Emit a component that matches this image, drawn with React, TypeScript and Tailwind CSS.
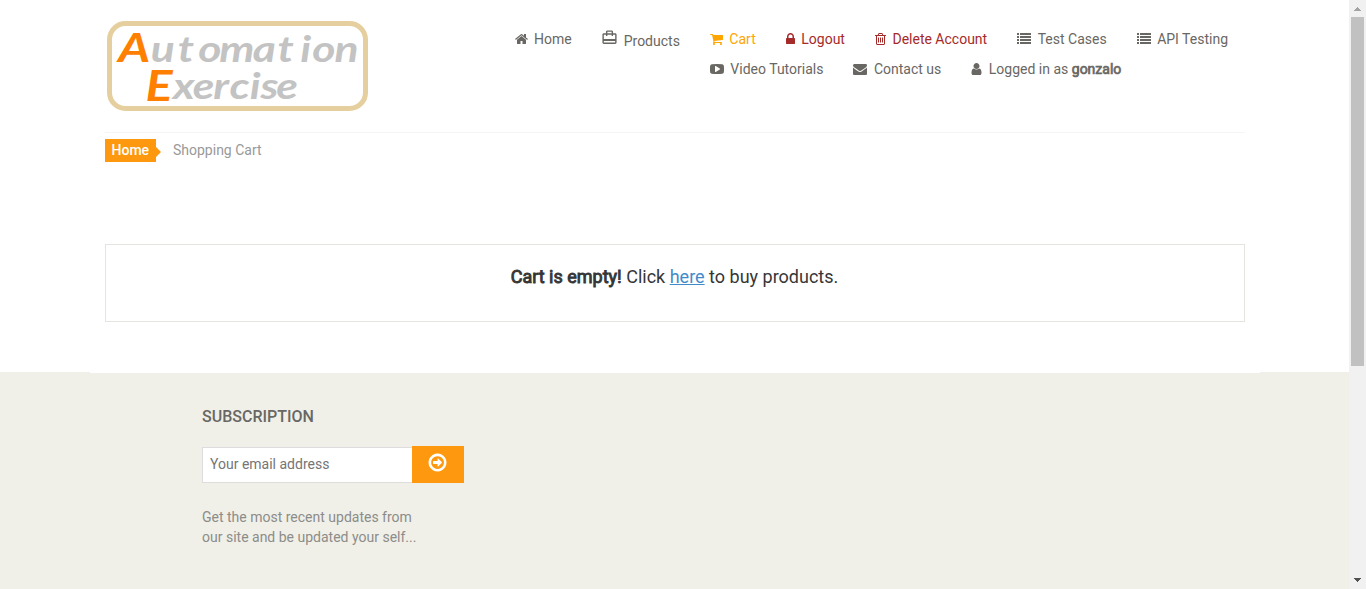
import React from "react";

type Glyph = { adv: number; d: string };

const home: Glyph = { adv: 1664, d: "M1472 992v480q0 26-19 45t-45 19h-384v-384h-256v384h-384q-26 0-45-19t-19-45v-480q0-1 .5-3t.5-3l575-474 575 474q1 2 1 6zm223-69l-62 74q-8 9-21 11h-3q-13 0-21-7l-692-577-692 577q-12 8-24 7-13-2-21-11l-62-74q-8-10-7-23.5t11-21.5l719-599q32-26 76-26t76 26l244 204v-195q0-14 9-23t23-9h192q14 0 23 9t9 23v408l219 182q10 8 11 21.5t-7 23.5z" };
const cart: Glyph = { adv: 1664, d: "M704 1536q0 52-38 90t-90 38-90-38-38-90 38-90 90-38 90 38 38 90zm896 0q0 52-38 90t-90 38-90-38-38-90 38-90 90-38 90 38 38 90zm128-1088v512q0 24-16.5 42.5t-40.5 21.5l-1044 122q13 60 13 70 0 16-24 64h920q26 0 45 19t19 45-19 45-45 19h-1024q-26 0-45-19t-19-45q0-11 8-31.5t16-36 21.5-40 15.5-29.5l-177-823h-204q-26 0-45-19t-19-45 19-45 45-19h256q16 0 28.5 6.5t19.5 15.5 13 24.5 8 26 5.5 29.5 4.5 26h1201q26 0 45 19t19 45z" };
const lock: Glyph = { adv: 1152, d: "M640 768h512v-192q0-106-75-181t-181-75-181 75-75 181v192zm832 96v576q0 40-28 68t-68 28h-960q-40 0-68-28t-28-68v-576q0-40 28-68t68-28h32v-192q0-184 132-316t316-132 316 132 132 316v192h32q40 0 68 28t28 68z" };
const trash: Glyph = { adv: 1408, d: "M704 736v576q0 14-9 23t-23 9h-64q-14 0-23-9t-9-23v-576q0-14 9-23t23-9h64q14 0 23 9t9 23zm256 0v576q0 14-9 23t-23 9h-64q-14 0-23-9t-9-23v-576q0-14 9-23t23-9h64q14 0 23 9t9 23zm256 0v576q0 14-9 23t-23 9h-64q-14 0-23-9t-9-23v-576q0-14 9-23t23-9h64q14 0 23 9t9 23zm128 724v-948h-896v948q0 22 7 40.5t14.5 27 10.5 8.5h832q3 0 10.5-8.5t14.5-27 7-40.5zm-672-1076h448l-48-117q-7-9-17-11h-317q-10 2-17 11zm928 32v64q0 14-9 23t-23 9h-96v948q0 83-47 143.5t-113 60.5h-832q-66 0-113-58.5t-47-141.5v-952h-96q-14 0-23-9t-9-23v-64q0-14 9-23t23-9h309l70-167q15-37 54-63t79-26h320q40 0 79 26t54 63l70 167h309q14 0 23 9t9 23z" };
const list: Glyph = { adv: 1792, d: "M0 1280h256v256H0zM0 896h256v256H0zM0 512h256v256H0zM384 1280h1408v256H384zM0 128h256v256H0zM384 896h1408v256H384zM384 512h1408v256H384zM384 128h1408v256H384z" };
const play: Glyph = { adv: 1792, d: "M1280 896q0-37-30-54l-512-320q-31-20-65-2-33 18-33 56v640q0 38 33 56 16 8 31 8 20 0 34-10l512-320q30-17 30-54zm512 0q0 96-1 150t-8.500 136.500-22.500 147.500q-16 73-69 123t-124 58q-222 25-671 25t-671-25q-71-8-124.500-58t-69.500-123q-14-65-21.500-147.500t-8.500-136.500-1-150 1-150 8.500-136.500 22.500-147.500q16-73 69-123t124-58q222-25 671-25t671 25q71 8 124.500 58t69.500 123q14 65 21.500 147.500t8.500 136.500 1 150z" };
const envelope: Glyph = { adv: 1792, d: "M1792 710v794q0 66-47 113t-113 47h-1472q-66 0-113-47t-47-113v-794q44 49 101 87 362 246 497 345 57 42 92.5 65.5t94.5 48 110 24.5h2q51 0 110-24.5t94.5-48 92.5-65.5q170-123 498-345 57-39 100-87zm0-294q0 79-49 151t-122 123q-376 261-468 325-10 7-42.5 31t-54 38.500-52 32.500-57.500 27-50 9h-2q-23 0-50-9t-57.500-27-52-32.500-54-38.500-42.500-31q-91-64-262-182.500t-205-142.500q-62-42-117-115.500t-55-136.500q0-78 41.500-130t118.500-52h1472q65 0 112.500 47t47.500 113z" };
const user: Glyph = { adv: 1408, d: "M1536 1399q0 109-62.5 187t-150.5 78h-854q-88 0-150.5-78t-62.5-187q0-85 8.5-160.5t31.5-152 58.5-131 94-89 134.5-34.5q131 128 313 128t313-128q76 0 134.5 34.5t94 89 58.5 131 31.5 152 8.5 160.5zm-256-887q0 159-112.5 271.5t-271.5 112.5-271.5-112.5-112.5-271.5 112.5-271.5 271.5-112.5 271.5 112.5 112.5 271.5z" };

function Icon({ g }: { g: Glyph }) {
  return (
    <svg
      className="shrink-0 overflow-visible"
      width={(g.adv / 1792) * 14}
      height={14}
      viewBox={`${(1792 - g.adv) / 2} 0 ${g.adv} 1792`}
      fill="currentColor"
    >
      <path d={g.d} fillRule="nonzero" />
    </svg>
  );
}

function NavItem({ g, color = "text-[#696763]", children }: { g: Glyph; color?: string; children: React.ReactNode }) {
  return (
    <a href="#" className={`flex h-5 items-center gap-[6.5px] whitespace-nowrap ${color}`}>
      <Icon g={g} />
      <span>{children}</span>
    </a>
  );
}

function Logo() {
  return (
    <svg width="261" height="90" viewBox="0 0 261 90" className="mt-[21px] ml-0.5 shrink-0">
      <rect x="2.5" y="2.5" width="256" height="85" rx="16" fill="none" stroke="#e6cf9f" strokeWidth="5" />
      <g transform="scale(1.2 1)" fontFamily="Lato, sans-serif" fontStyle="italic" fontWeight="700" fontSize="37">
        <text y="41" fill="#c3c3c3" x="9.3 36.5 59 76 93.5 121.5 142 161 171 189.500">
          <tspan fontSize="41" fill="#ff8000">A</tspan>utomation
        </text>
        <text y="78" fill="#c3c3c3" x="32 55 71.500 88.500 102 119 128 141">
          <tspan fontSize="42" fill="#ff8000" dy="2">E</tspan><tspan dy="-2">x</tspan>ercise
        </text>
      </g>
    </svg>
  );
}

function Scrollbar() {
  return (
    <div className="flex w-[17px] shrink-0 flex-col items-center bg-[#f1f1f1]">
      <svg width="17" height="17" viewBox="0 0 17 17" shapeRendering="crispEdges" fill="#a3a3a3">
        <path d="M8 7h1v1H8zM7 8h3v1H7zM6 9h5v1H6zM5 10h7v1H5z" />
      </svg>
      <div className="h-[349px] w-[13px] bg-[#c1c1c1]" />
      <svg className="mt-auto" width="17" height="17" viewBox="0 0 17 17" shapeRendering="crispEdges" fill="#505050">
        <path d="M5 6h7v1H5zM6 7h5v1H6zM7 8h3v1H7zM8 9h1v1H8z" />
      </svg>
    </div>
  );
}

export default function App() {
  return (
    <div className="flex h-[589px] w-[1366px] overflow-hidden bg-white font-['Roboto',sans-serif] text-sm leading-5">
      <div className="flex w-[1349px] flex-col">
        <header className="ml-[105px] flex h-[133px] w-[1140px] border-b border-[#f5f5f5]">
          <Logo />
          <nav className="ml-[146.5px] flex gap-[30px] pt-[29px]">
            <NavItem g={home}>Home</NavItem>
            <a href="#" className="flex h-5 gap-1.5 text-[#696763]">
              <svg className="-ml-px" width="17" height="17" viewBox="0 0 24 24" fill="currentColor">
                <path d="M20 6h-3V4c0-1.11-.89-2-2-2H9c-1.11 0-2 .89-2 2v2H4c-1.11 0-2 .89-2 2v11c0 1.11.89 2 2 2h16c1.11 0 2-.89 2-2V8c0-1.11-.89-2-2-2zM9 4h6v2H9V4zm11 15H4v-2h16v2zm0-5H4V8h3v2h2V8h6v2h2V8h3v6z" />
              </svg>
              <span className="pt-0.5">Products</span>
            </a>
            <div className="flex flex-col gap-2.5">
              <div className="flex gap-[30px]">
                <NavItem g={cart} color="text-[orange]">Cart</NavItem>
                <NavItem g={lock} color="text-[brown]">Logout</NavItem>
                <NavItem g={trash} color="text-[brown]">Delete Account</NavItem>
                <NavItem g={list}>Test Cases</NavItem>
                <NavItem g={list}>API Testing</NavItem>
              </div>
              <div className="flex gap-[30px]">
                <NavItem g={play}>Video Tutorials</NavItem>
                <NavItem g={envelope}>Contact us</NavItem>
                <NavItem g={user}>Logged in as <b className="font-normal [-webkit-text-stroke:0.7px]">gonzalo</b></NavItem>
              </div>
            </div>
          </nav>
        </header>

        <main className="ml-[105px] h-[239px] w-[1140px]">
          <div className="flex items-start pt-1.5">
            <span className="h-[23px] w-[51px] bg-[#fe980f] pl-[6.5px] leading-[23px] font-medium text-white">Home</span>
            <svg className="mt-2" width="5" height="10" viewBox="0 0 5 10" fill="#fe980f"><path d="M0 0l5 5-5 5z" /></svg>
            <span className="mt-px ml-3 text-[#999]">Shopping Cart</span>
          </div>
          <div className="mt-[82px] h-[78px] border border-[#e6e4df] pt-[19px] pr-px text-center text-lg leading-[26px] text-[#363636]">
            <b className="font-normal [-webkit-text-stroke:0.9px]">Cart is empty!</b> Click <a href="#" className="text-[#428bca] underline">here</a> to buy products.
          </div>
        </main>

        <footer className="flex-1 bg-[#f0f0e9]">
          <div className="mx-auto h-px w-[1170px] bg-white" />
          <div className="ml-[202px] pt-[34px]">
            <h2 className="text-base leading-5 font-medium text-[#696763]">SUBSCRIPTION</h2>
            <div className="mt-[18px] flex h-[38px] items-center">
              <input
                type="email"
                placeholder="Your email address"
                className="mt-0.5 h-9 w-[210px] border border-r-0 border-[#ddd] bg-white pr-1 pb-0.5 pl-[7px] outline-none placeholder:text-[#757575]"
              />
              <button className="mt-px flex h-[37px] w-[52px] items-center justify-center bg-[#fe980f] pr-px pb-1 text-white">
                <svg width="21" height="21" viewBox="0 0 1792 1792" fill="currentColor">
                  <path d="M1285 896q0 14-9 23l-320 320q-9 9-23 9-13 0-22.5-9.5t-9.5-22.5v-192h-352q-13 0-22.5-9.5t-9.5-22.5v-192q0-13 9.5-22.5t22.5-9.5h352v-192q0-14 9-23t23-9q12 0 24 10l319 319q9 9 9 23zm160 0q0-148-73-273t-198-198-273-73-273 73-198 198-73 273 73 273 198 198 273 73 273-73 198-198 73-273zm219 0q0 209-103 385.5t-279.5 279.5-385.5 103-385.5-103-279.5-279.5-103-385.5 103-385.5 279.5-279.5 385.5-103 385.5 103 279.5 279.5 103 385.5z" />
                </svg>
              </button>
            </div>
            <p className="mt-6 text-[#8c8c88]">
              Get the most recent updates from
              <br />
              our site and be updated your self...
            </p>
          </div>
        </footer>
      </div>
      <Scrollbar />
    </div>
  );
}
